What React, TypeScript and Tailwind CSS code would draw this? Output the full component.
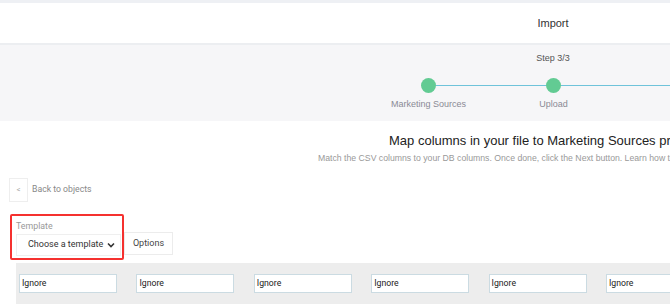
import React from "react";

const steps = ["Marketing Sources", "Upload", ""];

export default function App() {
  return (
    <div className="w-[670px] h-[304px] overflow-hidden bg-white" style={{ fontFamily: "'Liberation Sans', Arial, sans-serif" }}>
      <div className="w-[1106px]">
        <div className="h-[3px] bg-[#eef0f4]" />
        <div className="h-[42px] bg-white flex items-center justify-center text-[11px] text-[#333] border-b-2 border-[#eceef1]">
          Import
        </div>
        <div className="h-[76px] bg-[#f6f6f8] flex flex-col">
          <div className="h-[12px] mt-[7px] text-center text-[9px] leading-[12px] text-[#555]">Step 3/3</div>
          <div className="flex pl-[366px] mt-[14px]">
            {steps.map((s, i) => (
              <div key={i} className="w-[125px] flex flex-col items-center">
                <div className="w-full flex items-center h-[15px]">
                  <div className={`flex-1 h-[1px] ${i === 0 ? "bg-transparent" : "bg-[#6fc3da]"}`} />
                  <div className="w-[15px] h-[15px] rounded-full bg-[#62cb93] shrink-0" />
                  <div className={`flex-1 h-[1px] ${i === 2 ? "bg-transparent" : "bg-[#6fc3da]"}`} />
                </div>
                <div className="mt-[5px] h-[12px] text-[9px] leading-[12px] text-[#8a8a95] whitespace-nowrap">{s}</div>
              </div>
            ))}
          </div>
        </div>
        <div className="pl-[389px] mt-[12px] text-[13px] leading-[16px] text-[#222] whitespace-nowrap">
          Map columns in your file to Marketing Sources properties
        </div>
        <div className="pl-[318px] mt-[3px] text-[8.7px] leading-[12px] text-[#999] whitespace-nowrap">
          Match the CSV columns to your DB columns. Once done, click the Next button. Learn how to import data
        </div>
        <div className="flex items-center ml-[9px] mt-[14px]" style={{ fontFamily: "Roboto, sans-serif" }}>
          <div className="w-[19px] h-[24px] border border-[#eeeeee] flex items-center justify-center text-[8px] text-[#aaa]">&lt;</div>
          <div className="ml-[4px] text-[8.7px] text-[#888]">Back to objects</div>
        </div>
        <div className="flex items-end ml-[10px] mt-[12px]" style={{ fontFamily: "Roboto, sans-serif" }}>
          <div className="w-[114px] h-[46px] border-2 border-[#f5312f] rounded-[2px] pl-[4px] pt-[4px]">
            <div className="text-[8.8px] leading-[12px] text-[#999]">Template</div>
            <div className="mt-[2px] w-[105px] h-[22px] border border-[#efefef] bg-white flex items-center pl-[11px] pr-[5px] text-[9px] text-[#333]">
              <span className="flex-1 whitespace-nowrap">Choose a template</span>
              <svg width="8" height="6" viewBox="0 0 8 6"><path d="M1 1.5 L4 4.5 L7 1.5" stroke="#333" strokeWidth="1.6" fill="none" /></svg>
            </div>
          </div>
          <div className="w-[49px] h-[23px] mb-[5px] border border-[#ececec] flex items-center justify-center text-[9px] text-[#444]">
            Options
          </div>
        </div>
        <div className="ml-[16px] mt-[3px] h-[60px] bg-[#ededed] flex gap-[19.4px] pl-[3px] pt-[11px]" style={{ fontFamily: "Roboto, sans-serif" }}>
          {Array.from({ length: 6 }).map((_, i) => (
            <div key={i} className="w-[98px] h-[19px] bg-white border border-[#cbdbe2] flex items-center pl-[2px] text-[8.7px] text-[#222] shrink-0">
              Ignore
            </div>
          ))}
        </div>
      </div>
    </div>
  );
}
